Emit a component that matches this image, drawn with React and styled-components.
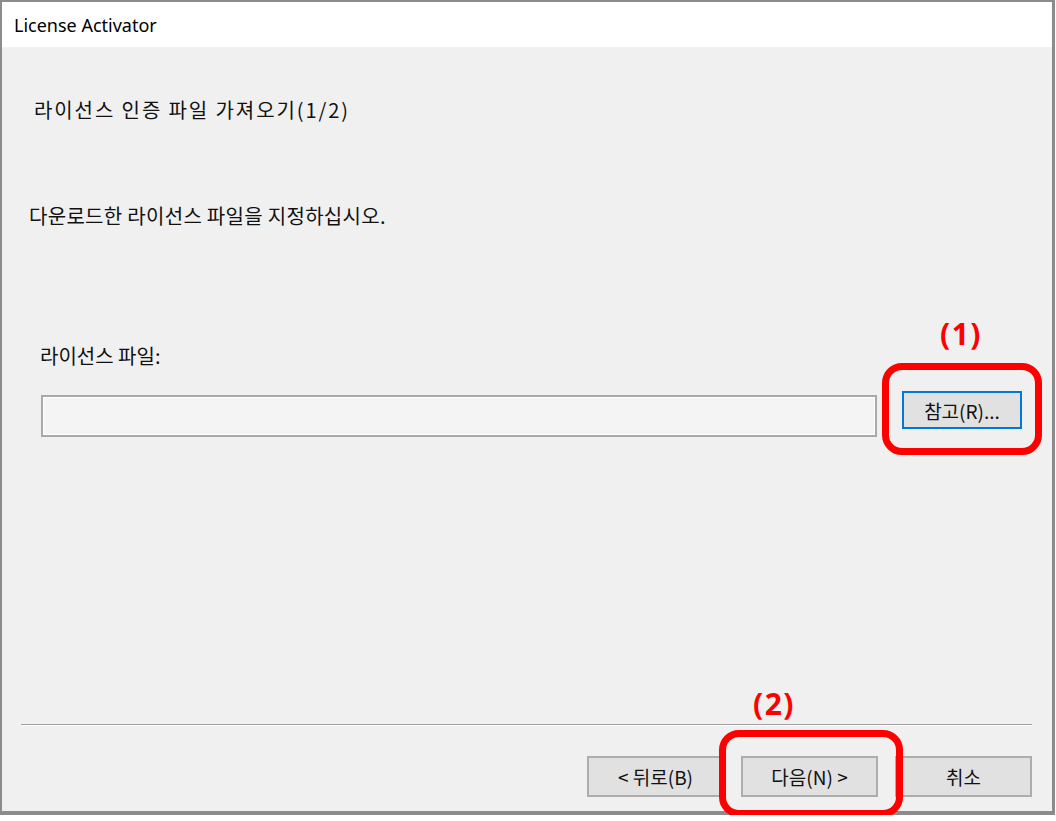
import React from "react";
import styled, { createGlobalStyle } from "styled-components";

const GlobalStyle = createGlobalStyle`
  html, body { margin: 0; padding: 0; background: #ffffff; }
  body { font-family: "Noto Sans", "Noto Sans CJK KR", sans-serif; }
  * { box-sizing: border-box; }
`;

const Window = styled.div`
  position: relative;
  width: 1055px;
  height: 815px;
  border: 2px solid #8c8c8c;
  border-bottom-width: 4px;
  border-right-width: 3px;
  display: flex;
  flex-direction: column;
  background: #f0f0f0;
`;

const TitleBar = styled.div`
  height: 45px;
  flex: none;
  background: #ffffff;
  display: flex;
  align-items: center;
  padding-left: 12px;
  font-family: "Noto Sans", sans-serif;
  font-size: 18px;
  color: #000;
`;

const Body = styled.div`
  flex: 1;
  display: flex;
  flex-direction: column;
  padding: 0 20px 14px 19px;
`;

const Heading = styled.div`
  margin-top: 51px;
  margin-left: 13px;
  font-family: "Noto Sans CJK KR", sans-serif;
  font-size: 20px;
  line-height: 24px;
  letter-spacing: 1.9px;
  color: #111;
`;

const Description = styled.div`
  margin-top: 82px;
  margin-left: 8px;
  font-family: "Noto Sans CJK KR", sans-serif;
  font-size: 20px;
  line-height: 24px;
  letter-spacing: 0.3px;
  color: #111;
`;

const FieldLabel = styled.div`
  margin-top: 116px;
  margin-left: 19px;
  font-family: "Noto Sans CJK KR", sans-serif;
  font-size: 20px;
  line-height: 24px;
  color: #111;
`;

const FieldRow = styled.div`
  margin-top: 23px;
  margin-left: 20px;
  display: flex;
  align-items: flex-start;
  gap: 25px;
`;

const TextBox = styled.div`
  width: 836px;
  height: 42px;
  margin-top: 4px;
  border: 2px solid #a9a9a9;
  background: #f4f4f4;
  box-shadow: inset 0 0 0 1px #ffffff;
`;

const Button = styled.button`
  width: ${(p) => p.$w || 137}px;
  height: ${(p) => p.$h || 41}px;
  background: #e1e1e1;
  border: 2px solid ${(p) => (p.$focused ? "#0078d7" : "#adadad")};
  font-family: "Noto Sans CJK KR", sans-serif;
  font-size: 19px;
  color: #111;
  padding: 0;
  display: flex;
  align-items: center;
  justify-content: center;
  cursor: default;
`;

const Footer = styled.div`
  margin-top: auto;
  display: flex;
  flex-direction: column;
`;

const Separator = styled.div`
  height: 2px;
  border-top: 1px solid #a0a0a0;
  border-bottom: 1px solid #ffffff;
`;

const ButtonRow = styled.div`
  margin-top: 30px;
  display: flex;
  justify-content: flex-end;
  gap: 17px;
`;

const Highlight = styled.div`
  position: absolute;
  left: ${(p) => p.$x}px;
  top: ${(p) => p.$y}px;
  width: ${(p) => p.$w}px;
  height: ${(p) => p.$h}px;
  border: 7px solid #ff0000;
  border-radius: 20px;
  pointer-events: none;
`;

const Marker = styled.div`
  position: absolute;
  left: ${(p) => p.$x}px;
  top: ${(p) => p.$y}px;
  font-family: "Noto Sans", sans-serif;
  font-weight: 700;
  font-size: 30px;
  line-height: 34px;
  letter-spacing: 1.5px;
  color: #ff0000;
`;

export default function App() {
  return (
    <>
      <GlobalStyle />
      <Window>
        <TitleBar>License Activator</TitleBar>
        <Body>
          <Heading>라이선스 인증 파일 가져오기(1/2)</Heading>
          <Description>다운로드한 라이선스 파일을 지정하십시오.</Description>
          <FieldLabel>라이선스 파일:</FieldLabel>
          <FieldRow>
            <TextBox />
            <Button $w={120} $h={38} $focused>
              참고(R)...
            </Button>
          </FieldRow>
          <Footer>
            <Separator />
            <ButtonRow>
              <Button>&lt; 뒤로(B)</Button>
              <Button>다음(N) &gt;</Button>
              <Button>취소</Button>
            </ButtonRow>
          </Footer>
        </Body>
        <Marker $x={938} $y={315}>(1)</Marker>
        <Highlight $x={880} $y={361} $w={160} $h={92} />
        <Marker $x={751} $y={685}>(2)</Marker>
        <Highlight $x={717} $y={728} $w={184} $h={87} />
      </Window>
    </>
  );
}
